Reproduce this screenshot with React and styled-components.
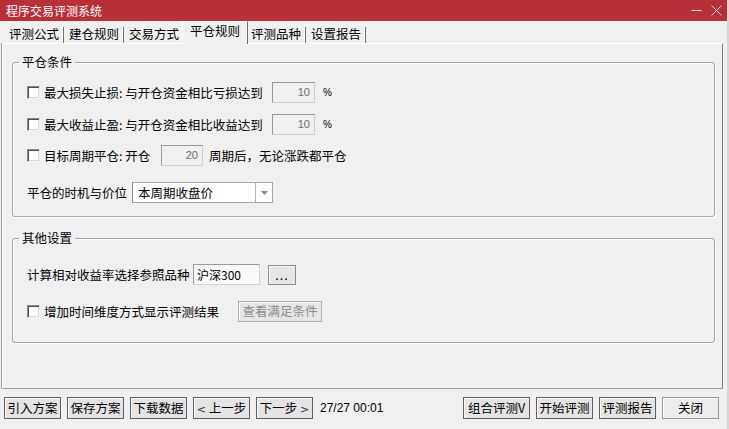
import React from "react";
import styled, { createGlobalStyle } from "styled-components";

const Global = createGlobalStyle`
  html, body { margin: 0; padding: 0; background: #f0f0f0; }
  body { font-family: "Noto Sans CJK SC", "Noto Sans", sans-serif; font-size: 12.5px; color: #000; }
  * { box-sizing: border-box; }
`;

const Window = styled.div`
  width: 729px;
  height: 429px;
  display: flex;
  flex-direction: column;
  background: #f0f0f0;
  overflow: hidden;
  border-right: 2px solid #d6d6d6;
`;

const TitleBar = styled.div`
  height: 21px;
  flex: none;
  background: #b73038;
  display: flex;
  align-items: center;
  padding: 0 5px 0 6px;
  color: #fff;
`;

const Title = styled.div`
  flex: 1;
  font-size: 12px;
  line-height: 21px;
`;

const Controls = styled.div`
  display: flex;
  align-items: center;
  gap: 9px;
`;

const TabStrip = styled.div`
  height: 22px;
  flex: none;
  display: flex;
  padding-left: 4px;
  position: relative;
  z-index: 1;
`;

const Tab = styled.div`
  position: relative;
  height: ${(p) => (p.$active ? "23px" : "22px")};
  padding: ${(p) => (p.$active ? "1px 7px 0 7px" : "5px 5px 0 5px")};
  margin: ${(p) => (p.$active ? "0 -2px" : "0")};
  line-height: 16px;
  white-space: nowrap;
  background: #f0f0f0;
  z-index: ${(p) => (p.$active ? 2 : 1)};
  border-left: ${(p) => (p.$active ? "1px solid #fff" : "none")};
  border-top: ${(p) => (p.$active ? "1px solid #fff" : "none")};
  border-right: ${(p) => (p.$active ? "1px solid #6a6a6a" : "none")};
  &::after {
    content: "";
    display: ${(p) => (p.$active ? "none" : "block")};
    position: absolute;
    right: 0;
    top: 6px;
    bottom: 0;
    width: 1px;
    background: #6e6e6e;
    box-shadow: -1px 0 0 #fff;
  }
`;

const Panel = styled.div`
  height: 346px;
  flex: none;
  margin: 0 4px 0 2px;
  border-top: 1px solid #fff;
  border-left: 1px solid #fff;
  border-right: 1px solid #7d7d7d;
  border-bottom: 1px solid #9a9a9a;
  box-shadow: -1px 0 0 #a0a0a0;
  padding: 18px 7px 0 9px;
`;

const Group = styled.div`
  position: relative;
  height: ${(p) => p.$h}px;
  margin-top: ${(p) => p.$mt || 0}px;
  border: 1px solid #a3a3a3;
  border-radius: 3px;
  box-shadow: inset 1px 1px 0 #fff, 1px 1px 0 #fff;
  padding: ${(p) => p.$pt}px 0 0 14px;
`;

const GroupTitle = styled.div`
  position: absolute;
  top: -9px;
  left: 6px;
  padding: 0 3px;
  background: #f0f0f0;
  line-height: 16px;
`;

const Row = styled.div`
  display: flex;
  align-items: center;
  height: 21px;
  margin-top: ${(p) => p.$mt || 0}px;
`;

const CheckBox = styled.span`
  width: 13px;
  height: 13px;
  flex: none;
  background: #fff;
  border: 1px solid;
  border-color: #8a8a8a #f4f4f4 #f4f4f4 #8a8a8a;
  box-shadow: inset 1px 1px 0 #505050, inset -1px -1px 0 #d8d8d8;
  margin-right: 4px;
`;

const Label = styled.span`
  width: ${(p) => (p.$w ? `${p.$w}px` : "auto")};
  margin-left: ${(p) => p.$ml || 0}px;
  flex: none;
  white-space: nowrap;
  line-height: 16px;
`;

const NumBox = styled.div`
  width: ${(p) => p.$w}px;
  height: 21px;
  flex: none;
  border: 1px solid;
  border-color: #9a9a9a #d0d0d0 #d0d0d0 #9a9a9a;
  background: #f0f0f0;
  color: #6d6d6d;
  font-family: "Liberation Sans", Arial, sans-serif;
  font-size: 11px;
  line-height: 19px;
  text-align: right;
  padding-right: 4px;
`;

const Unit = styled.span`
  margin-left: 8px;
  font-family: "Liberation Sans", Arial, sans-serif;
  font-size: 10px;
`;

const Select = styled.div`
  width: 141px;
  height: 21px;
  flex: none;
  display: flex;
  border: 1px solid #a8a8a8;
  border-left-color: #8a8a8a;
  background: #fff;
`;

const SelectValue = styled.div`
  flex: 1;
  padding-left: 5px;
  line-height: 19px;
`;

const SelectArrow = styled.div`
  width: 17px;
  flex: none;
  border-left: 1px solid #b4b4b4;
  display: flex;
  align-items: center;
  justify-content: center;
`;

const TextBox = styled.div`
  width: ${(p) => p.$w}px;
  height: 21px;
  flex: none;
  border: 1px solid;
  border-color: #9a9a9a #d4d4d4 #d4d4d4 #9a9a9a;
  background: #f9f9f9;
  padding-left: 3px;
  font-size: 12px;
  line-height: 19px;
`;

const SmallButton = styled.div`
  width: ${(p) => p.$w}px;
  height: ${(p) => p.$h || 21}px;
  margin-left: ${(p) => p.$ml || 0}px;
  flex: none;
  border: 1px solid ${(p) => (p.$disabled ? "#adadad" : "#8d8d8d")};
  background: #e6e6e6;
  box-shadow: inset 1px 1px 0 #fafafa;
  color: ${(p) => (p.$disabled ? "#8c8c8c" : "#000")};
  text-align: center;
  line-height: ${(p) => (p.$h || 21) - 3}px;
  letter-spacing: ${(p) => (p.$dots ? "1px" : "0")};
`;

const Footer = styled.div`
  flex: 1;
  display: flex;
  align-items: flex-start;
  padding: 8px 8px 0 4px;
  gap: 6px;
`;

const Button = styled.div`
  width: ${(p) => p.$w || 57}px;
  height: 22px;
  flex: none;
  margin-left: ${(p) => (p.$push ? "auto" : "0")};
  border: 1px solid ${(p) => (p.$soft ? "#9a9a9a" : "#5f5f5f")};
  background: ${(p) => (p.$soft ? "#ececec" : "#e4e4e4")};
  box-shadow: inset 1px 1px 0 #fff;
  text-align: center;
  line-height: 19px;
  white-space: pre;
`;

const Chevron = styled.span`
  font-family: "DejaVu Sans", sans-serif;
  font-size: 11px;
  color: #333;
`;

const Status = styled.div`
  margin-left: 1px;
  font-family: "Liberation Sans", Arial, sans-serif;
  font-size: 12px;
  line-height: 22px;
  white-space: nowrap;
`;

const Minimize = () => (
  <svg width="11" height="11" viewBox="0 0 11 11">
    <line x1="0.5" y1="5.5" x2="10.5" y2="5.5" stroke="#f5d9db" strokeWidth="1" />
  </svg>
);

const Close = () => (
  <svg width="11" height="11" viewBox="0 0 11 11">
    <line x1="0.5" y1="0.5" x2="10.5" y2="10.5" stroke="#f5d9db" strokeWidth="1" />
    <line x1="10.5" y1="0.5" x2="0.5" y2="10.5" stroke="#f5d9db" strokeWidth="1" />
  </svg>
);

const Arrow = () => (
  <svg width="7" height="4" viewBox="0 0 7 4">
    <polygon points="0,0 7,0 3.5,4" fill="#8a8a8a" />
  </svg>
);

const tabs = ["评测公式", "建仓规则", "交易方式", "平仓规则", "评测品种", "设置报告"];

export default function App() {
  return (
    <>
      <Global />
      <Window>
        <TitleBar>
          <Title>程序交易评测系统</Title>
          <Controls>
            <Minimize />
            <Close />
          </Controls>
        </TitleBar>
        <TabStrip>
          {tabs.map((t) => (
            <Tab key={t} $active={t === "平仓规则"}>
              {t}
            </Tab>
          ))}
        </TabStrip>
        <Panel>
          <Group $h={155} $pt={19}>
            <GroupTitle>平仓条件</GroupTitle>
            <Row>
              <CheckBox />
              <Label $w={228}>最大损失止损: 与开仓资金相比亏损达到</Label>
              <NumBox $w={43}>10</NumBox>
              <Unit>%</Unit>
            </Row>
            <Row $mt={11}>
              <CheckBox />
              <Label $w={228}>最大收益止盈: 与开仓资金相比收益达到</Label>
              <NumBox $w={43}>10</NumBox>
              <Unit>%</Unit>
            </Row>
            <Row $mt={10}>
              <CheckBox />
              <Label $w={117}>目标周期平仓: 开仓</Label>
              <NumBox $w={42}>20</NumBox>
              <Label $ml={6}>周期后，无论涨跌都平仓</Label>
            </Row>
            <Row $mt={16}>
              <Label $w={105}>平仓的时机与价位</Label>
              <Select>
                <SelectValue>本周期收盘价</SelectValue>
                <SelectArrow>
                  <Arrow />
                </SelectArrow>
              </Select>
            </Row>
          </Group>
          <Group $h={105} $mt={21} $pt={25}>
            <GroupTitle>其他设置</GroupTitle>
            <Row>
              <Label $w={166}>计算相对收益率选择参照品种</Label>
              <TextBox $w={67}>沪深300</TextBox>
              <SmallButton $w={28} $h={20} $ml={8} $dots>
                ...
              </SmallButton>
            </Row>
            <Row $mt={16}>
              <CheckBox />
              <Label $w={194}>增加时间维度方式显示评测结果</Label>
              <SmallButton $w={84} $disabled>
                查看满足条件
              </SmallButton>
            </Row>
          </Group>
        </Panel>
        <Footer>
          <Button>引入方案</Button>
          <Button>保存方案</Button>
          <Button>下载数据</Button>
          <Button>
            <Chevron>&lt;</Chevron> 上一步
          </Button>
          <Button>
            下一步 <Chevron>&gt;</Chevron>
          </Button>
          <Status>27/27 00:01</Status>
          <Button $push $w={67}>
            组合评测V
          </Button>
          <Button>开始评测</Button>
          <Button>评测报告</Button>
          <Button $soft>关闭</Button>
        </Footer>
      </Window>
    </>
  );
}
